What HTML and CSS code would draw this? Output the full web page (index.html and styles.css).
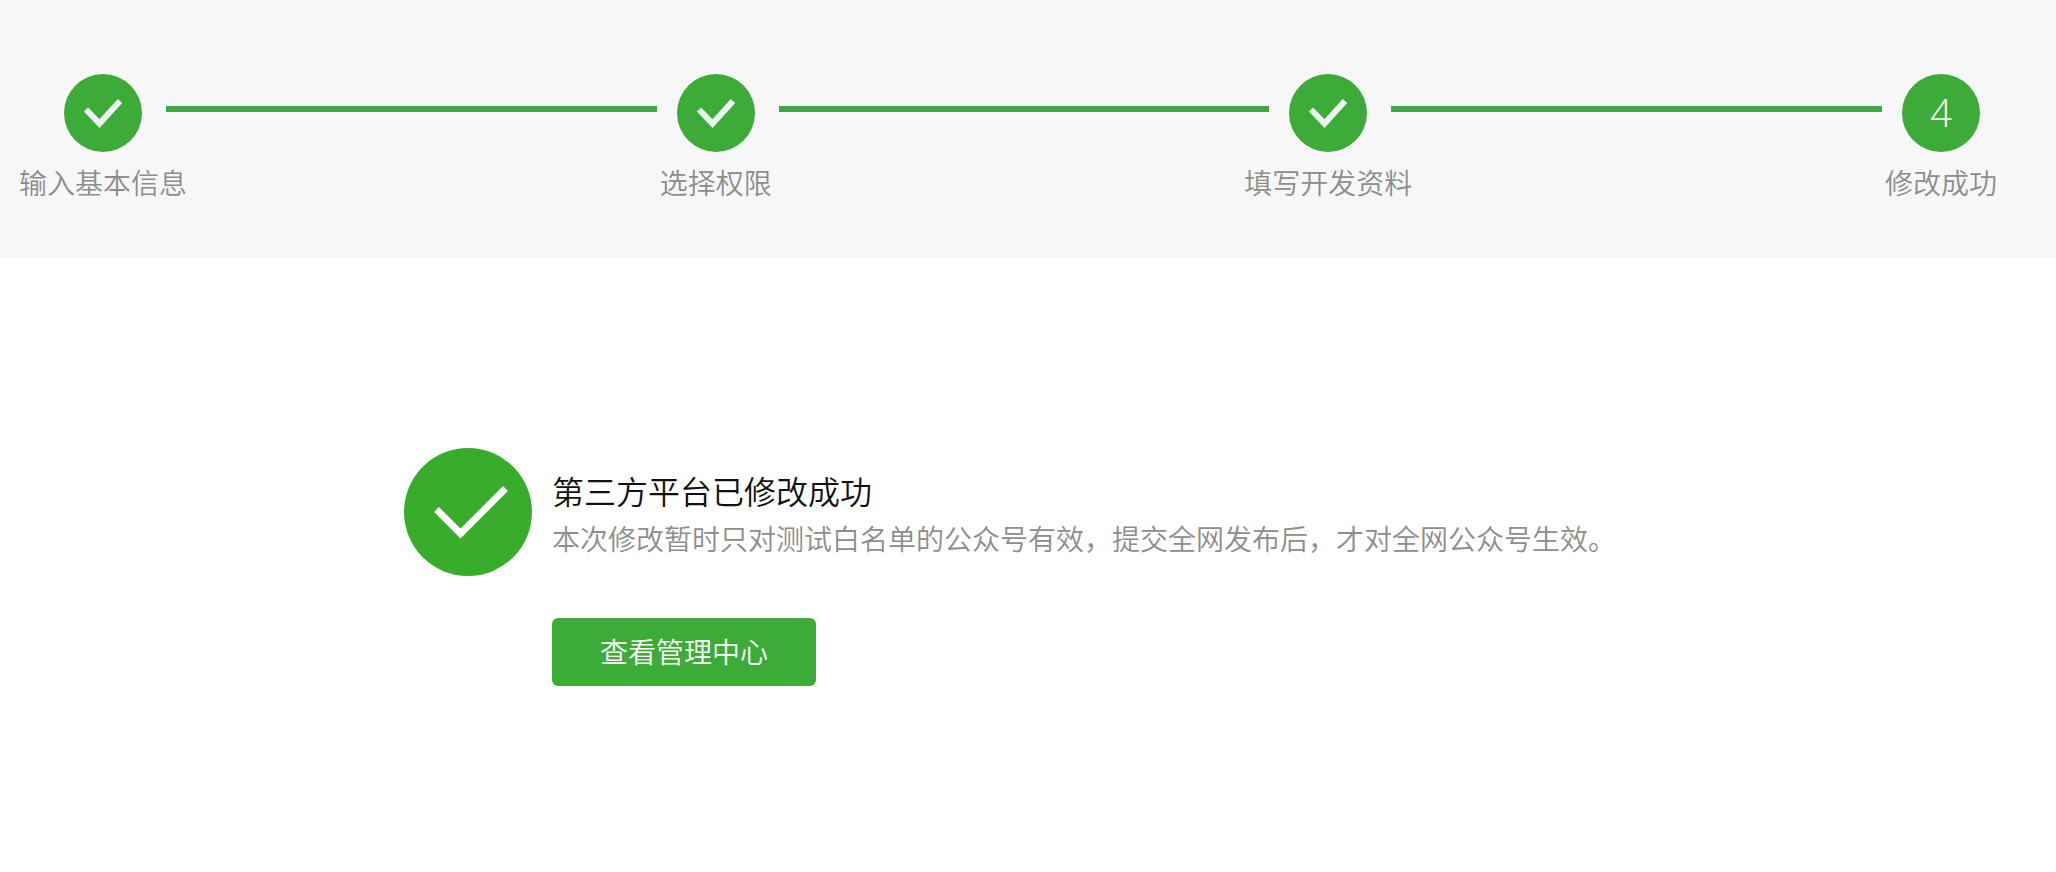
FILE: index.html
```html
<!DOCTYPE html>
<html lang="zh-CN">
<head>
    <meta charset="UTF-8">
    <meta name="viewport" content="width=device-width, initial-scale=1.0">
    <title>修改成功</title>
    <link rel="stylesheet" href="styles.css">
</head>
<body>
    <ol class="steps">
        <li class="step">
            <svg class="step-icon" viewBox="0 0 78 78" aria-hidden="true">
                <circle cx="39" cy="39" r="39"/>
                <path d="M22 35.5L35.5 49.5L56 27"/>
            </svg>
            <span class="step-label">输入基本信息</span>
        </li>
        <li class="step-line" role="presentation"></li>
        <li class="step">
            <svg class="step-icon" viewBox="0 0 78 78" aria-hidden="true">
                <circle cx="39" cy="39" r="39"/>
                <path d="M22 35.5L35.5 49.5L56 27"/>
            </svg>
            <span class="step-label">选择权限</span>
        </li>
        <li class="step-line" role="presentation"></li>
        <li class="step">
            <svg class="step-icon" viewBox="0 0 78 78" aria-hidden="true">
                <circle cx="39" cy="39" r="39"/>
                <path d="M22 35.5L35.5 49.5L56 27"/>
            </svg>
            <span class="step-label">填写开发资料</span>
        </li>
        <li class="step-line" role="presentation"></li>
        <li class="step">
            <span class="step-icon step-number">4</span>
            <span class="step-label">修改成功</span>
        </li>
    </ol>

    <main class="result">
        <svg class="result-icon" viewBox="0 0 128 128" aria-hidden="true">
            <circle cx="64" cy="64" r="64"/>
            <path d="M32.5 61.5L56.5 85.5L101.5 40.5"/>
        </svg>
        <div class="result-body">
            <h1>第三方平台已修改成功</h1>
            <p>本次修改暂时只对测试白名单的公众号有效，提交全网发布后，才对全网公众号生效。</p>
            <button type="button" class="btn">查看管理中心</button>
        </div>
    </main>
</body>
</html>
```

FILE: styles.css
```css
body {
    margin: 0;
    background-color: #fff;
    color: #111;
    font-family: "Noto Sans CJK SC", sans-serif;
    font-size: 28px;
    font-weight: 350;
}

/* step bar */
.steps {
    display: flex;
    margin: 0;
    padding: 74px 76px 56px 64px;
    list-style: none;
    background-color: #f7f7f7;
}
.step {
    display: flex;
    flex-direction: column;
    align-items: center;
    width: 78px;
}
.step-icon {
    flex: none;
    width: 78px;
    height: 78px;
}
.step-icon circle {
    fill: #3cab38;
}
.step-icon path {
    fill: none;
    stroke: #ebf4f1;
    stroke-width: 6;
}
.step-number {
    border-radius: 50%;
    background-color: #3cab38;
    color: #fff;
    font-family: "Open Sans", sans-serif;
    font-size: 38px;
    line-height: 76px;
    text-align: center;
}
.step-label {
    margin-top: 10px;
    color: #8d8d8d;
    line-height: 40px;
    white-space: nowrap;
}
.step-line {
    flex: 1;
    height: 6px;
    margin: 32px 20px 0 24px;
    background-color: #3cab41;
}

/* result message */
.result {
    display: flex;
    gap: 20px;
    max-width: 1248px;
    margin: 190px auto 0;
}
.result-icon {
    flex: none;
    width: 128px;
    height: 128px;
}
.result-icon circle {
    fill: #37ad2b;
}
.result-icon path {
    fill: none;
    stroke: #fff;
    stroke-width: 7;
}
.result-body {
    padding-top: 18px;
}
.result-body h1 {
    margin: 0;
    font-size: 32px;
    font-weight: 350;
    line-height: 48px;
}
.result-body p {
    margin: 4px 0 60px;
    color: #8d8d8d;
    line-height: 40px;
}
.btn {
    padding: 0 48px 2px;
    border: 0;
    border-radius: 6px;
    background-color: #3cab38;
    color: #fff;
    font: inherit;
    line-height: 66px;
    cursor: pointer;
}
```
